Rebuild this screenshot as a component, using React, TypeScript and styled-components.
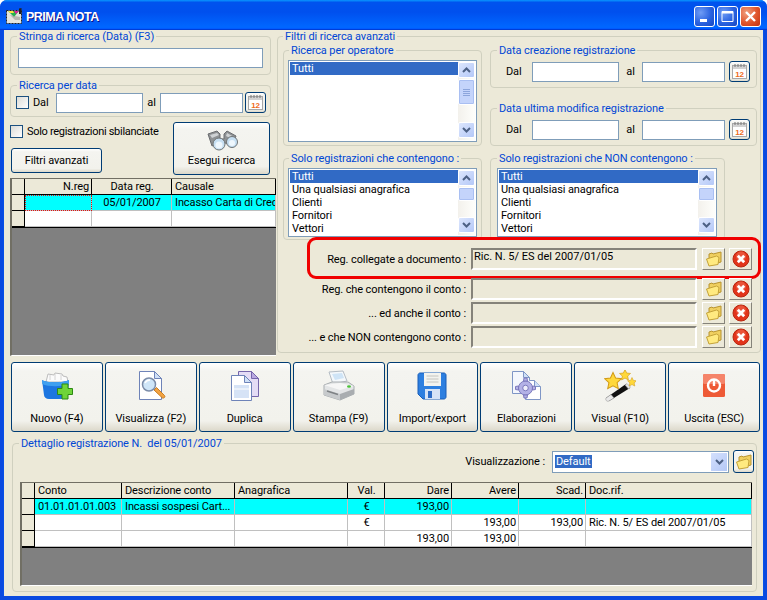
import React from "react"
import styled, { createGlobalStyle } from "styled-components"

const GlobalStyle = createGlobalStyle`
  html, body { margin: 0; padding: 0; background: #fff; }
  * { box-sizing: border-box; }
  body { font-family: Roboto, "Liberation Sans", Arial, sans-serif; font-size: 11px; letter-spacing: -0.1px; color: #000; }
`

const Frame = styled.div`
  width: 767px;
  height: 600px;
  display: flex;
  flex-direction: column;
  border-radius: 7px 7px 0 0;
  overflow: hidden;
  background: #0a4ae0;
`
const TitleBar = styled.div`
  height: 30px;
  flex: none;
  display: flex;
  align-items: center;
  padding: 2px 6px 0 6px;
  background: linear-gradient(180deg, #0997ff, #0053ee 8%, #0050ee 40%, #0066ff 88%, #0066ff 93%, #005bff 95%, #003dd7 96%, #003dd7);
`
const TitleText = styled.div`
  flex: 1;
  margin: 2px 0 0 4px;
  color: #fff;
  font-family: "Liberation Sans", Arial, sans-serif;
  font-weight: 700;
  font-size: 12.5px;
  letter-spacing: -0.5px;
  text-shadow: 1px 1px 0 #0f1089;
`
const CaptionButton = styled.div<{ $close?: boolean }>`
  width: 21px;
  height: 21px;
  margin-left: 2px;
  border: 1px solid #fff;
  border-radius: 3px;
  display: flex;
  align-items: center;
  justify-content: center;
  background: ${(p) =>
    p.$close
      ? "radial-gradient(circle at 30% 30%, #f0a080, #e0552c 55%, #c03010)"
      : "radial-gradient(circle at 30% 30%, #6f9cf5, #2a62e0 55%, #1746c0)"};
`
const Client = styled.div`
  flex: 1;
  margin: 0 4px 4px;
  background: #ece9d8;
  display: flex;
  flex-direction: column;
  min-height: 0;
  box-shadow: -1px 0 0 #0850e8, 1px 0 0 #0850e8;
`
const TopArea = styled.div`
  display: flex;
  align-items: flex-start;
  padding-left: 6px;
`
const LeftColumn = styled.div`
  width: 266px;
  flex: none;
  display: flex;
  flex-direction: column;
`
const Group = styled.fieldset<{ $w?: number; $top?: number; $left?: number }>`
  margin: ${(p) => p.$top ?? 0}px 0 0 ${(p) => p.$left ?? 0}px;
  padding: 0;
  min-width: 0;
  width: ${(p) => (p.$w ? `${p.$w}px` : "auto")};
  border: 1px solid #d0d0bf;
  border-radius: 4px;
`
const GroupBody = styled.div<{ $pad: string }>`
  padding: ${(p) => p.$pad};
`
const Legend = styled.legend<{ $x?: number }>`
  margin-left: ${(p) => p.$x ?? 6}px;
  padding: 0 2px;
  line-height: 13px;
  color: #0046d5;
  white-space: nowrap;
`
const TextInput = styled.div<{ $w?: number }>`
  width: ${(p) => (p.$w ? `${p.$w}px` : "100%")};
  height: 20px;
  flex: none;
  background: #fff;
  border: 1px solid #7f9db9;
`
const DateRow = styled.div<{ $left: number }>`
  display: flex;
  align-items: center;
  height: 21px;
  padding-left: ${(p) => p.$left}px;
`
const DateLabel = styled.span<{ $w: number; $center?: boolean; $inset?: number }>`
  width: ${(p) => p.$w}px;
  flex: none;
  padding-left: ${(p) => p.$inset ?? 0}px;
  text-align: ${(p) => (p.$center ? "center" : "left")};
`
const CheckBox = styled.div`
  width: 13px;
  height: 13px;
  flex: none;
  border: 1px solid #1c5180;
  background: linear-gradient(135deg, #dcdcd7, #fff);
`
const XpButton = styled.button<{ $w?: number; $h?: number }>`
  width: ${(p) => (p.$w ? `${p.$w}px` : "auto")};
  height: ${(p) => (p.$h ? `${p.$h}px` : "auto")};
  flex: none;
  margin: 0;
  padding: 0;
  font: inherit;
  letter-spacing: inherit;
  color: #000;
  border: 1px solid #003c74;
  border-radius: 3px;
  background: linear-gradient(180deg, #fff, #f4f4f0 12%, #f2f2ec 85%, #dcd8ca);
  display: flex;
  flex-direction: column;
  align-items: center;
  justify-content: center;
`
const CalendarButton = styled(XpButton)<{ $gap: number }>`
  margin-left: ${(p) => p.$gap}px;
`
const SearchArea = styled.div`
  display: grid;
  grid-template-columns: 163px 97px;
  margin-top: 5px;
`
const SearchOptions = styled.div`
  display: flex;
  flex-direction: column;
  padding-top: 3px;
`
const CheckLine = styled.div`
  display: flex;
  align-items: center;
  gap: 4px;
  height: 13px;
  letter-spacing: -0.3px;
  white-space: nowrap;
`
const FilterButtonWrap = styled.div`
  margin: 10px 0 0 1px;
`
const SearchLabel = styled.span`
  margin-top: 3px;
`
const DataGrid = styled.div<{ $h: number; $top?: number }>`
  height: ${(p) => p.$h}px;
  margin-top: ${(p) => p.$top ?? 0}px;
  background: #808080;
  border-left: 2px solid #716f64;
  border-top: 1px solid #716f64;
  border-bottom: 1px solid #fff;
  overflow: hidden;
`
const GridRow = styled.div<{ $cols: string; $hit?: boolean; $closing?: boolean }>`
  display: grid;
  grid-template-columns: ${(p) => p.$cols};
  height: ${(p) => (p.$closing ? 17 : 16)}px;
  background: ${(p) => (p.$hit ? "#00ffff" : "#fff")};
  ${(p) => (p.$closing ? "border-bottom: 1px solid #000;" : "")}
`
const Indicator = styled.div`
  background: #ece9d8;
  border-right: 1px solid #000;
  border-bottom: 1px solid #000;
`
const HeadCell = styled.div<{ $align?: string }>`
  background: #ece9d8;
  border-right: 1px solid #000;
  border-bottom: 1px solid #000;
  padding: 0 2px 0 3px;
  line-height: 15px;
  text-align: ${(p) => p.$align ?? "left"};
  white-space: nowrap;
  overflow: hidden;
`
const DataCell = styled.div<{ $align?: string; $focus?: boolean }>`
  border-right: 1px solid #c0c0c0;
  border-bottom: 1px solid #c0c0c0;
  padding: 0 2px 0 3px;
  line-height: 15px;
  text-align: ${(p) => p.$align ?? "left"};
  white-space: nowrap;
  overflow: hidden;
  ${(p) => (p.$focus ? "outline: 1px dotted #e01010; outline-offset: -1px;" : "")}
`
const AdvancedLayout = styled.div`
  display: grid;
  grid-template-columns: 199px 267px;
  column-gap: 8px;
`
const DateStack = styled.div`
  display: flex;
  flex-direction: column;
`
const ListBox = styled.div<{ $h: number }>`
  height: ${(p) => p.$h}px;
  border: 1px solid #7f9db9;
  background: #fff;
  padding: 1px;
  display: flex;
  overflow: hidden;
`
const ListItems = styled.div`
  flex: 1;
  min-width: 0;
`
const ListItem = styled.div<{ $selected?: boolean }>`
  height: 13px;
  line-height: 13px;
  padding-left: 2px;
  background: ${(p) => (p.$selected ? "#316ac5" : "transparent")};
  color: ${(p) => (p.$selected ? "#fff" : "#000")};
  white-space: nowrap;
`
const ScrollBar = styled.div`
  width: 17px;
  flex: none;
  display: flex;
  flex-direction: column;
  padding-bottom: 2px;
  background: linear-gradient(90deg, #f3f1ec, #fefefb);
`
const ScrollArrow = styled.div`
  height: 16px;
  flex: none;
  border: 1px solid #fff;
  border-radius: 2px;
  background: linear-gradient(135deg, #dce6fd, #b4c8f8);
  display: flex;
  align-items: center;
  justify-content: center;
`
const ScrollThumb = styled.div<{ $h: number }>`
  height: ${(p) => p.$h}px;
  flex: none;
  margin-top: 1px;
  border: 1px solid #fff;
  border-radius: 2px;
  box-shadow: inset 0 0 0 1px #a9bff2;
  background: #c4d4fb;
  display: flex;
  flex-direction: column;
  align-items: center;
  justify-content: center;
  gap: 1px;
`
const ThumbLine = styled.div`
  width: 7px;
  height: 1px;
  background: #8ca5dc;
`
const ScrollSpacer = styled.div`
  flex: 1;
`
const LinkedRows = styled.div`
  margin: 8px 5px 0 0;
  display: flex;
  flex-direction: column;
  gap: 2px;
`
const LinkedRow = styled.div<{ $marked?: boolean }>`
  position: relative;
  display: flex;
  align-items: center;
  height: 22px;
  ${(p) => (p.$marked ? "margin-bottom: 6px;" : "")}
  ${(p) =>
    p.$marked
      ? `&::after {
    content: "";
    position: absolute;
    top: -11px;
    bottom: -9px;
    left: 24px;
    right: -9px;
    border: 3px solid #f00000;
    border-radius: 9px;
    pointer-events: none;
  }`
      : ""}
`
const LinkedLabel = styled.div`
  flex: 1;
  text-align: right;
  padding-right: 5px;
  white-space: nowrap;
`
const SunkenField = styled.div`
  width: 226px;
  height: 22px;
  flex: none;
  border: 2px solid;
  border-color: #85837a #fff #fff #85837a;
  background: #ece9d8;
  padding-left: 1px;
  line-height: 13px;
  letter-spacing: 0;
  white-space: nowrap;
`
const FlatButton = styled.div<{ $gap: number }>`
  width: 23px;
  height: 22px;
  flex: none;
  margin-left: ${(p) => p.$gap}px;
  border: 1px solid;
  border-color: #fff #85837a #85837a #fff;
  display: flex;
  align-items: center;
  justify-content: center;
  background: #ece9d8;
`
const Toolbar = styled.div`
  display: grid;
  grid-template-columns: repeat(8, 1fr);
  column-gap: 2px;
  margin: 6px 3px 0 7px;
`
const ToolButton = styled(XpButton)`
  height: 70px;
  justify-content: flex-start;
  padding-top: 7px;
`
const ToolLabel = styled.span`
  margin-top: 10px;
  line-height: 13px;
  white-space: nowrap;
`
const ViewRow = styled.div`
  display: flex;
  align-items: center;
  justify-content: flex-end;
  height: 23px;
  margin-bottom: 9px;
`
const ViewLabel = styled.span`
  margin-right: 7px;
`
const ComboBox = styled.div`
  width: 177px;
  height: 22px;
  margin-right: 4px;
  border: 1px solid #7f9db9;
  background: #fff;
  display: flex;
  align-items: center;
  justify-content: space-between;
  padding: 1px 1px 1px 2px;
`
const ComboValue = styled.span`
  background: #316ac5;
  color: #fff;
  line-height: 13px;
  padding: 0 1px;
`
const ComboArrow = styled.div`
  width: 16px;
  height: 18px;
  background: linear-gradient(135deg, #d4e0fd, #b4c8f6);
  display: flex;
  align-items: center;
  justify-content: center;
`
const DetailGridWrap = styled.div`
  margin-right: 2px;
`

const Chevron = ({ down }: { down?: boolean }) => (
  <svg width="9" height="6" viewBox="0 0 9 6">
    <path d={down ? "M1 1l3.5 3.5L8 1" : "M1 5l3.5-3.5L8 5"} fill="none" stroke="#4d6185" strokeWidth="2" />
  </svg>
)

const Scroller = ({ thumb }: { thumb: number }) => (
  <ScrollBar>
    <ScrollArrow><Chevron /></ScrollArrow>
    <ScrollThumb $h={thumb}>
      {thumb > 20 && (<><ThumbLine /><ThumbLine /><ThumbLine /><ThumbLine /></>)}
    </ScrollThumb>
    <ScrollSpacer />
    <ScrollArrow><Chevron down /></ScrollArrow>
  </ScrollBar>
)

const CalendarIcon = () => (
  <svg width="17" height="17" viewBox="0 0 17 17">
    <rect x="1.5" y="2.5" width="14" height="13" fill="#fff" stroke="#a8a8a8" />
    <rect x="2" y="3" width="13" height="3" fill="#d2d2d2" />
    <path d="M4 1v3M7 1v3M10 1v3M13 1v3" stroke="#777" />
    <text x="8.5" y="13.5" textAnchor="middle" fontSize="8" fontWeight="700" fontFamily="Liberation Sans, sans-serif" fill="#ef6a1a">12</text>
  </svg>
)

const FolderIcon = () => (
  <svg width="18" height="16" viewBox="0 0 18 16">
    <path d="M4 6V3l3-1 1 1 8-2v10L5 14z" fill="#f0d060" stroke="#b89430" strokeLinejoin="round" />
    <path d="M1.5 8l10-3 2.5 1.5-1 7-9 1.5z" fill="#ffea80" stroke="#c4a238" strokeLinejoin="round" />
  </svg>
)

const DeleteIcon = () => (
  <svg width="18" height="18" viewBox="0 0 18 18">
    <circle cx="9" cy="9" r="8" fill="#e2341a" stroke="#b8270f" />
    <circle cx="9" cy="6.5" r="5" fill="#f47c5f" opacity=".45" />
    <path d="M5.8 5.8l6.4 6.4M12.2 5.8l-6.4 6.4" stroke="#fff" strokeWidth="2.8" />
  </svg>
)

const Binoculars = () => (
  <svg width="32" height="21" viewBox="0 0 32 21">
    <path d="M2 4l9-3 3 3v5h4V4l3-3 9 5-3 9-8-2-3-1-3 1-7 3z" fill="#8f9294" stroke="#6b6d70" />
    <path d="M4 5l7-2 2 2-7 3zM21 3l7 4-2 2-6-3z" fill="#cfd2d4" />
    <circle cx="13" cy="14" r="6" fill="#c6dff2" stroke="#6f7476" />
    <circle cx="13" cy="15" r="3.5" fill="#eef7fd" />
    <circle cx="26" cy="12" r="5.5" fill="#c6dff2" stroke="#6f7476" />
    <circle cx="26" cy="13" r="3" fill="#eef7fd" />
  </svg>
)

const NewIcon = () => (
  <svg width="32" height="32" viewBox="0 0 32 32">
    <path d="M5 12l2-8 6 1 1-2 7 1 1 2 4 1 1 5z" fill="#fbfbfb" stroke="#bcbcbc" />
    <path d="M9 5v5M14 4v6M20 5v5" stroke="#d4d4d4" />
    <path d="M1 10c4 3 22 3 27 0l-1 15c0 2-3 4-6 4H8c-3 0-5-2-5-4z" fill="#1d76e0" />
    <path d="M1 10c4 3 22 3 27 0l-.3 4c-6 3-21 3-26.4 0z" fill="#3fa0f0" />
    <path d="M21 14h6v4.5h4.5v6H27V29h-6v-4.5h-4.5v-6H21z" fill="#6fd43a" stroke="#2d8a12" />
  </svg>
)

const ViewIcon = () => (
  <svg width="32" height="32" viewBox="0 0 32 32">
    <path d="M4.5 1.5h15l7 7v21h-22z" fill="#fff" stroke="#6e83b8" />
    <path d="M19.5 1.5v7h7z" fill="#cfe0f6" stroke="#6e83b8" />
    <path d="M19 20l2.5-2.5 8 8c1 1 0 3-2 2.5z" fill="#f3a341" stroke="#c77d24" />
    <circle cx="14" cy="14.5" r="6.5" fill="#cfe6f8" stroke="#7b8ca8" strokeWidth="1.5" />
    <path d="M10 13c1-2 3-3 5-3" stroke="#fff" strokeWidth="1.5" fill="none" />
  </svg>
)

const CopyIcon = () => (
  <svg width="32" height="32" viewBox="0 0 32 32">
    <path d="M9.5 1.5h13l7 7v18h-20z" fill="#e4dcf5" stroke="#7565ab" />
    <path d="M22.5 1.5v7h7z" fill="#b9a8e0" stroke="#7565ab" />
    <path d="M2.5 5.5h13l7 7v18h-20z" fill="#fff" stroke="#6e83b8" />
    <path d="M15.5 5.5v7h7z" fill="#cfe0f6" stroke="#6e83b8" />
    <rect x="5" y="15" width="15" height="13" fill="#d6e3f6" />
    <path d="M5 19h15" stroke="#fff" />
  </svg>
)

const PrintIcon = () => (
  <svg width="32" height="32" viewBox="0 0 32 32">
    <path d="M6 2l14-1 4 10-14 3z" fill="#f4f8fb" stroke="#b4bcc4" />
    <path d="M9 4l10-1 2 5-9 2z" fill="#cfe4f6" />
    <path d="M1 15l8-3h16l6 4v8l-14 6-16-5z" fill="#e3e5e6" stroke="#a8adb0" />
    <path d="M1 15l16 5 14-4-14-3z" fill="#f6f6f6" />
    <path d="M1 19l16 5v6L1 25z" fill="#c7cacc" />
    <path d="M17 24l14-5v5l-14 6z" fill="#a9adb0" />
    <path d="M4 21l11 3.5" stroke="#7e8285" strokeWidth="1.5" />
    <ellipse cx="26" cy="16.5" rx="2" ry="1.2" fill="#4cc23a" />
  </svg>
)

const SaveIcon = () => (
  <svg width="32" height="32" viewBox="0 0 32 32">
    <path d="M2 5c0-1 1-2 2-2h24c1 0 2 1 2 2v22c0 1-1 2-2 2H7l-5-5z" fill="#2d7fe0" stroke="#1b5fb8" />
    <rect x="8" y="3" width="17" height="13" fill="#f3f3ef" />
    <path d="M10.5 6h12M10.5 9h12M10.5 12h12" stroke="#c4c4c0" />
    <rect x="9" y="19" width="15" height="10" fill="#d6e3f6" />
    <rect x="12" y="21" width="4" height="7" fill="#2d6cc6" />
  </svg>
)

const GearDocIcon = () => (
  <svg width="32" height="32" viewBox="0 0 32 32">
    <path d="M2.5 1.5h11l6 6v16h-17z" fill="#f4f7fd" stroke="#7f96c6" />
    <path d="M13.5 1.5v6h6z" fill="#cfe0f6" stroke="#7f96c6" />
    <path d="M19.5 10.5h5l6 6v13h-15v-6" fill="#fff" stroke="#7f96c6" />
    <path d="M24.5 10.5v6h6" fill="#cfe0f6" stroke="#7f96c6" />
    <g fill="#b3b1e6" stroke="#7c79bd">
      <circle cx="15.5" cy="18" r="7" />
      <path d="M14 8h3l.5 3h-4zM14 28h3l.5-3h-4zM5.5 16.5v3l3 .5v-4zM25.5 16.5v3l-3 .5v-4z" />
    </g>
    <circle cx="15.5" cy="18" r="2.8" fill="#eeeefb" stroke="#7c79bd" />
  </svg>
)

const Star = ({ x, y, s }: { x: number; y: number; s: number }) => (
  <path
    transform={`translate(${x} ${y}) scale(${s})`}
    d="M0-5l1.5 3.2 3.5.4-2.6 2.4.7 3.5L0 2.8-3.1 4.5l.7-3.5L-5-1.4l3.5-.4z"
    fill="#ffd83a"
    stroke="#d19a16"
    strokeWidth=".6"
  />
)

const WandIcon = () => (
  <svg width="32" height="32" viewBox="0 0 32 32">
    <path d="M2 28l20-14 4 4L5 31z" fill="#111" />
    <path d="M2 28l5-3.5 3 3.5L5 31c-2 1-4-1-3-3z" fill="#e9e9e9" stroke="#999" strokeWidth=".6" />
    <path d="M21 15l2-1.5 3.5 3.5-2 2z" fill="#e6e6e6" stroke="#999" strokeWidth=".6" />
    <Star x={9} y={11} s={1.7} />
    <Star x={21} y={5} s={1.1} />
    <Star x={28} y={12} s={.9} />
  </svg>
)

const PowerIcon = () => (
  <svg width="32" height="32" viewBox="0 0 32 32">
    <rect x="5" y="4" width="22" height="23" rx="1.5" fill="#ee5a36" />
    <rect x="5" y="4" width="22" height="10" rx="1.5" fill="#f5846a" />
    <circle cx="16" cy="15.5" r="6" fill="none" stroke="#fff" strokeWidth="2.4" />
    <path d="M16 10v6" stroke="#fff" strokeWidth="2.4" />
  </svg>
)

const AppIcon = () => (
  <svg width="16" height="16" viewBox="0 0 16 16">
    <rect x="0.5" y="2.5" width="15" height="13" fill="#e4e4dc" stroke="#222" strokeDasharray="2 1" />
    <path d="M2 3h11L8 9z" fill="#22b14c" />
    <path d="M2 3h5l1 2H4z" fill="#ffe040" />
    <path d="M8 3h5l-3 3z" fill="#e01b9a" />
    <path d="M13 0.5l2.5-.5v6H13z" fill="#222" />
    <path d="M4 7l5 5h5V9z" fill="#9a9a92" opacity=".6" />
  </svg>
)

const tools: [string, React.ReactNode][] = [
  ["Nuovo (F4)", <NewIcon />],
  ["Visualizza (F2)", <ViewIcon />],
  ["Duplica", <CopyIcon />],
  ["Stampa (F9)", <PrintIcon />],
  ["Import/export", <SaveIcon />],
  ["Elaborazioni", <GearDocIcon />],
  ["Visual (F10)", <WandIcon />],
  ["Uscita (ESC)", <PowerIcon />]
]

const anagrafiche = ["Tutti", "Una qualsiasi anagrafica", "Clienti", "Fornitori", "Vettori"]
const topCols = "13px 67px 80px 1fr"
const detailCols = "13px 87px 113px 113px 37px 67px 67px 67px 1fr"

const detailRows = [
  { conto: "01.01.01.01.003", descr: "Incassi sospesi Cart...", val: "€", dare: "193,00", avere: "", scad: "", doc: "" },
  { conto: "", descr: "", val: "€", dare: "", avere: "193,00", scad: "193,00", doc: "Ric. N. 5/ ES del 2007/01/05" },
  { conto: "", descr: "", val: "", dare: "193,00", avere: "193,00", scad: "", doc: "" }
]

const linked = [
  { label: "Reg. collegate a documento :", value: "Ric. N. 5/ ES del 2007/01/05", marked: true },
  { label: "Reg. che contengono il conto :", value: "" },
  { label: "... ed anche il conto :", value: "" },
  { label: "... e che NON contengono conto :", value: "" }
]

const RangeRow = () => (
  <DateRow $left={15}>
    <DateLabel $w={26}>Dal</DateLabel>
    <TextInput $w={87} />
    <DateLabel $w={23} $center>al</DateLabel>
    <TextInput $w={83} />
    <CalendarButton $w={21} $h={21} $gap={4}><CalendarIcon /></CalendarButton>
  </DateRow>
)

const App = () => {
  return (
    <Frame>
      <GlobalStyle />
      <TitleBar>
        <AppIcon />
        <TitleText>PRIMA NOTA</TitleText>
        <CaptionButton>
          <svg width="13" height="13" viewBox="0 0 13 13"><rect x="2" y="9" width="7" height="3" fill="#fff" /></svg>
        </CaptionButton>
        <CaptionButton>
          <svg width="13" height="13" viewBox="0 0 13 13"><path d="M1 1.5h11v10H1z" fill="none" stroke="#fff" /><rect x="1" y="1" width="11" height="2.5" fill="#fff" /></svg>
        </CaptionButton>
        <CaptionButton $close>
          <svg width="13" height="13" viewBox="0 0 13 13"><path d="M2 2l9 9M11 2l-9 9" stroke="#fff" strokeWidth="2.4" /></svg>
        </CaptionButton>
      </TitleBar>
      <Client>
        <TopArea>
          <LeftColumn>
            <Group $w={261}>
              <Legend>Stringa di ricerca (Data) (F3)</Legend>
              <GroupBody $pad="5px 7px 6px 7px"><TextInput /></GroupBody>
            </Group>
            <Group $w={261} $top={4}>
              <Legend>Ricerca per data</Legend>
              <GroupBody $pad="0 0 3px 0">
                <DateRow $left={5}>
                  <CheckBox />
                  <DateLabel $w={27} $inset={4}>Dal</DateLabel>
                  <TextInput $w={87} />
                  <DateLabel $w={17} $center>al</DateLabel>
                  <TextInput $w={83} />
                  <CalendarButton $w={21} $h={21} $gap={2}><CalendarIcon /></CalendarButton>
                </DateRow>
              </GroupBody>
            </Group>
            <SearchArea>
              <SearchOptions>
                <CheckLine><CheckBox />Solo registrazioni sbilanciate</CheckLine>
                <FilterButtonWrap>
                  <XpButton $w={91} $h={25}>Filtri avanzati</XpButton>
                </FilterButtonWrap>
              </SearchOptions>
              <XpButton $w={97} $h={53}>
                <Binoculars />
                <SearchLabel>Esegui ricerca</SearchLabel>
              </XpButton>
            </SearchArea>
            <DataGrid $h={178} $top={3}>
              <GridRow $cols={topCols}>
                <Indicator />
                <HeadCell $align="right">N.reg</HeadCell>
                <HeadCell $align="center">Data reg.</HeadCell>
                <HeadCell>Causale</HeadCell>
              </GridRow>
              <GridRow $cols={topCols} $hit>
                <Indicator />
                <DataCell $focus />
                <DataCell $align="center">05/01/2007</DataCell>
                <DataCell>Incasso Carta di Credito</DataCell>
              </GridRow>
              <GridRow $cols={topCols} $closing>
                <Indicator />
                <DataCell />
                <DataCell />
                <DataCell />
              </GridRow>
            </DataGrid>
          </LeftColumn>

          <Group $w={484} $left={1}>
            <Legend $x={5}>Filtri di ricerca avanzati</Legend>
            <GroupBody $pad="1px 3px 4px 5px">
              <AdvancedLayout>
                <Group>
                  <Legend $x={5}>Ricerca per operatore</Legend>
                  <GroupBody $pad="3px 4px 3px 4px">
                    <ListBox $h={82}>
                      <ListItems><ListItem $selected>Tutti</ListItem></ListItems>
                      <Scroller thumb={26} />
                    </ListBox>
                  </GroupBody>
                </Group>
                <DateStack>
                  <Group>
                    <Legend>Data creazione registrazione</Legend>
                    <GroupBody $pad="4px 0 5px 0"><RangeRow /></GroupBody>
                  </Group>
                  <Group $top={14}>
                    <Legend>Data ultima modifica registrazione</Legend>
                    <GroupBody $pad="4px 0 5px 0"><RangeRow /></GroupBody>
                  </Group>
                </DateStack>
                <Group $top={6}>
                  <Legend $x={5}>Solo registrazioni che contengono :</Legend>
                  <GroupBody $pad="3px 4px 2px 4px">
                    <ListBox $h={69}>
                      <ListItems>
                        {anagrafiche.map((a, i) => <ListItem key={a} $selected={i === 0}>{a}</ListItem>)}
                      </ListItems>
                      <Scroller thumb={14} />
                    </ListBox>
                  </GroupBody>
                </Group>
                <Group $w={235} $top={6}>
                  <Legend>Solo registrazioni che NON contengono :</Legend>
                  <GroupBody $pad="3px 7px 2px 6px">
                    <ListBox $h={69}>
                      <ListItems>
                        {anagrafiche.map((a, i) => <ListItem key={a} $selected={i === 0}>{a}</ListItem>)}
                      </ListItems>
                      <Scroller thumb={14} />
                    </ListBox>
                  </GroupBody>
                </Group>
              </AdvancedLayout>
              <LinkedRows>
                {linked.map((r) => (
                  <LinkedRow key={r.label} $marked={r.marked}>
                    <LinkedLabel>{r.label}</LinkedLabel>
                    <SunkenField>{r.value}</SunkenField>
                    <FlatButton $gap={5}><FolderIcon /></FlatButton>
                    <FlatButton $gap={4}><DeleteIcon /></FlatButton>
                  </LinkedRow>
                ))}
              </LinkedRows>
            </GroupBody>
          </Group>
        </TopArea>

        <Toolbar>
          {tools.map(([label, icon]) => (
            <ToolButton key={label}>
              {icon}
              <ToolLabel>{label}</ToolLabel>
            </ToolButton>
          ))}
        </Toolbar>

        <Group $w={745} $top={5} $left={8}>
          <Legend>Dettaglio registrazione N.&nbsp; del 05/01/2007</Legend>
          <GroupBody $pad="0 2px 5px 7px">
            <ViewRow>
              <ViewLabel>Visualizzazione :</ViewLabel>
              <ComboBox>
                <ComboValue>Default</ComboValue>
                <ComboArrow><Chevron down /></ComboArrow>
              </ComboBox>
              <XpButton $w={21} $h={23}><FolderIcon /></XpButton>
            </ViewRow>
            <DetailGridWrap>
              <DataGrid $h={104}>
                <GridRow $cols={detailCols}>
                  <Indicator />
                  <HeadCell>Conto</HeadCell>
                  <HeadCell>Descrizione conto</HeadCell>
                  <HeadCell>Anagrafica</HeadCell>
                  <HeadCell $align="center">Val.</HeadCell>
                  <HeadCell $align="right">Dare</HeadCell>
                  <HeadCell $align="right">Avere</HeadCell>
                  <HeadCell $align="right">Scad.</HeadCell>
                  <HeadCell>Doc.rif.</HeadCell>
                </GridRow>
                {detailRows.map((r, i) => (
                  <GridRow key={i} $cols={detailCols} $hit={i === 0} $closing={i === 2}>
                    <Indicator />
                    <DataCell>{r.conto}</DataCell>
                    <DataCell>{r.descr}</DataCell>
                    <DataCell />
                    <DataCell $align="center">{r.val}</DataCell>
                    <DataCell $align="right">{r.dare}</DataCell>
                    <DataCell $align="right">{r.avere}</DataCell>
                    <DataCell $align="right">{r.scad}</DataCell>
                    <DataCell>{r.doc}</DataCell>
                  </GridRow>
                ))}
              </DataGrid>
            </DetailGridWrap>
          </GroupBody>
        </Group>
      </Client>
    </Frame>
  )
}

export default App
